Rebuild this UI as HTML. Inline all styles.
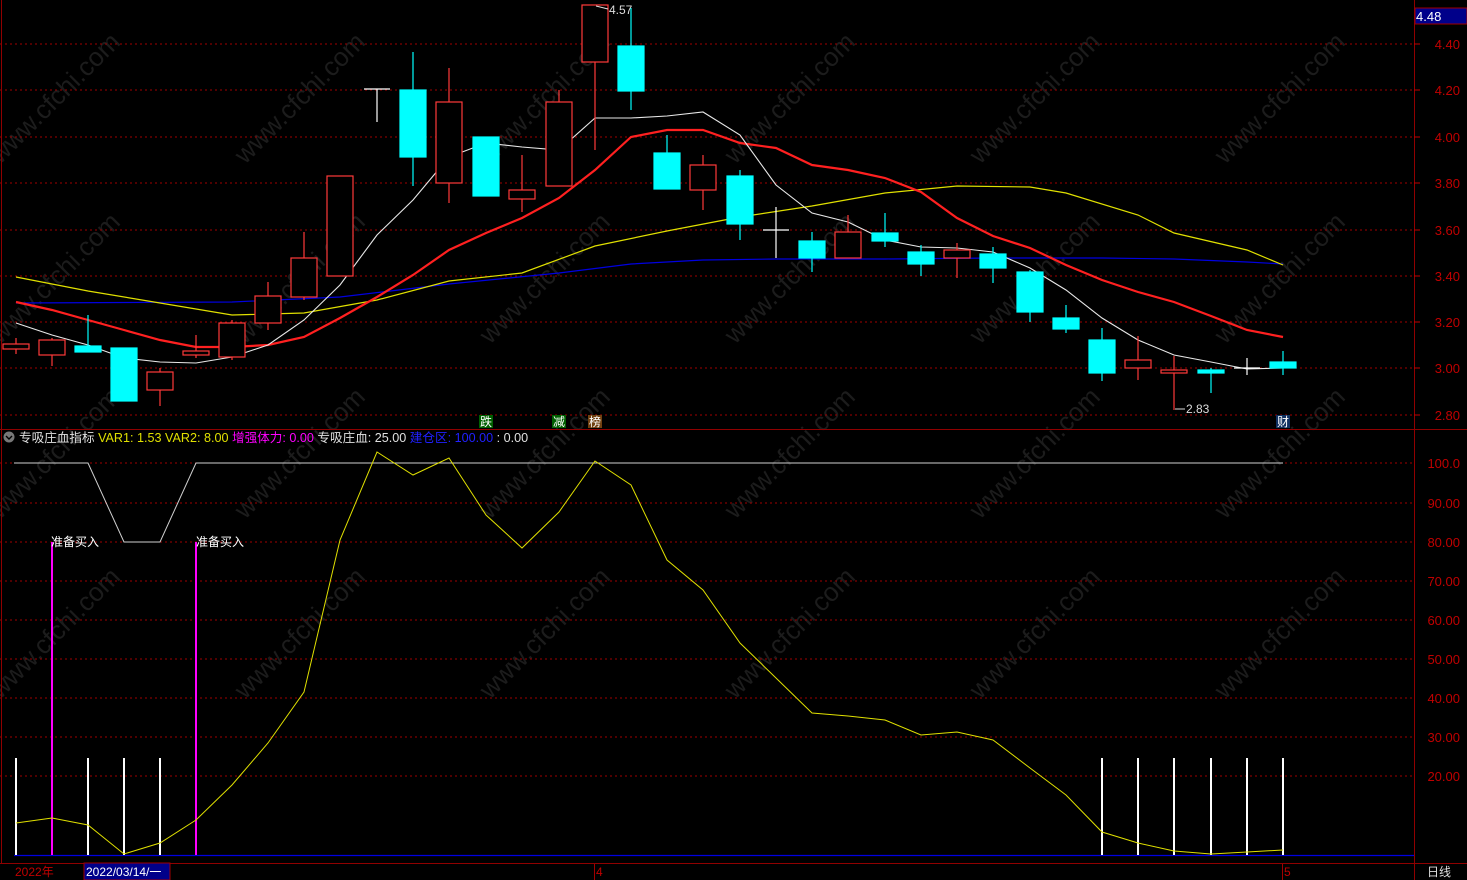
<!DOCTYPE html><html><head><meta charset="utf-8"><style>
html,body{margin:0;padding:0;background:#000;width:1467px;height:880px;overflow:hidden}
svg{display:block}
text{font-family:"Liberation Sans","Noto Sans CJK SC",sans-serif}
</style></head><body>
<svg width="1467" height="880" viewBox="0 0 1467 880" xmlns="http://www.w3.org/2000/svg">
<rect width="1467" height="880" fill="#000"/>
<!-- watermark -->
<g fill="#1c1c1c" font-size="26">
<text transform="translate(0,165) rotate(-45)">www.cfchi.com</text>
<text transform="translate(245,165) rotate(-45)">www.cfchi.com</text>
<text transform="translate(490,165) rotate(-45)">www.cfchi.com</text>
<text transform="translate(735,165) rotate(-45)">www.cfchi.com</text>
<text transform="translate(980,165) rotate(-45)">www.cfchi.com</text>
<text transform="translate(1225,165) rotate(-45)">www.cfchi.com</text>
<text transform="translate(0,345) rotate(-45)">www.cfchi.com</text>
<text transform="translate(245,345) rotate(-45)">www.cfchi.com</text>
<text transform="translate(490,345) rotate(-45)">www.cfchi.com</text>
<text transform="translate(735,345) rotate(-45)">www.cfchi.com</text>
<text transform="translate(980,345) rotate(-45)">www.cfchi.com</text>
<text transform="translate(1225,345) rotate(-45)">www.cfchi.com</text>
<text transform="translate(0,520) rotate(-45)">www.cfchi.com</text>
<text transform="translate(245,520) rotate(-45)">www.cfchi.com</text>
<text transform="translate(490,520) rotate(-45)">www.cfchi.com</text>
<text transform="translate(735,520) rotate(-45)">www.cfchi.com</text>
<text transform="translate(980,520) rotate(-45)">www.cfchi.com</text>
<text transform="translate(1225,520) rotate(-45)">www.cfchi.com</text>
<text transform="translate(0,700) rotate(-45)">www.cfchi.com</text>
<text transform="translate(245,700) rotate(-45)">www.cfchi.com</text>
<text transform="translate(490,700) rotate(-45)">www.cfchi.com</text>
<text transform="translate(735,700) rotate(-45)">www.cfchi.com</text>
<text transform="translate(980,700) rotate(-45)">www.cfchi.com</text>
<text transform="translate(1225,700) rotate(-45)">www.cfchi.com</text>
</g>
<g stroke="#a00000" stroke-dasharray="2,3" stroke-width="1">
<line x1="0" y1="44" x2="1414" y2="44"/><line x1="0" y1="90" x2="1414" y2="90"/><line x1="0" y1="137" x2="1414" y2="137"/><line x1="0" y1="183" x2="1414" y2="183"/><line x1="0" y1="230" x2="1414" y2="230"/><line x1="0" y1="276" x2="1414" y2="276"/><line x1="0" y1="322" x2="1414" y2="322"/><line x1="0" y1="368" x2="1414" y2="368"/><line x1="0" y1="415" x2="1414" y2="415"/>
<line x1="0" y1="463" x2="1414" y2="463"/><line x1="0" y1="503" x2="1414" y2="503"/><line x1="0" y1="542" x2="1414" y2="542"/><line x1="0" y1="581" x2="1414" y2="581"/><line x1="0" y1="620" x2="1414" y2="620"/><line x1="0" y1="659" x2="1414" y2="659"/><line x1="0" y1="698" x2="1414" y2="698"/><line x1="0" y1="737" x2="1414" y2="737"/><line x1="0" y1="776" x2="1414" y2="776"/>
</g>
<g stroke="#900000" stroke-width="1" fill="none">
<line x1="0" y1="429.5" x2="1467" y2="429.5"/>
<line x1="0" y1="863.5" x2="1467" y2="863.5"/>
<line x1="1414.5" y1="0" x2="1414.5" y2="880"/>
<line x1="1.5" y1="0" x2="1.5" y2="863"/>
</g>
<g fill="#c00000" font-size="13" text-anchor="end">
<text x="1460" y="49">4.40</text><text x="1460" y="95">4.20</text><text x="1460" y="142">4.00</text><text x="1460" y="188">3.80</text><text x="1460" y="235">3.60</text><text x="1460" y="281">3.40</text><text x="1460" y="327">3.20</text><text x="1460" y="373">3.00</text><text x="1460" y="420">2.80</text>
<text x="1460" y="468">100.0</text><text x="1460" y="508">90.00</text><text x="1460" y="547">80.00</text><text x="1460" y="586">70.00</text><text x="1460" y="625">60.00</text><text x="1460" y="664">50.00</text><text x="1460" y="703">40.00</text><text x="1460" y="742">30.00</text><text x="1460" y="781">20.00</text>
</g>
<g stroke="#c00000"><line x1="1414" y1="44" x2="1420" y2="44"/><line x1="1414" y1="90" x2="1420" y2="90"/><line x1="1414" y1="137" x2="1420" y2="137"/><line x1="1414" y1="183" x2="1420" y2="183"/><line x1="1414" y1="230" x2="1420" y2="230"/><line x1="1414" y1="276" x2="1420" y2="276"/><line x1="1414" y1="322" x2="1420" y2="322"/><line x1="1414" y1="368" x2="1420" y2="368"/><line x1="1414" y1="415" x2="1420" y2="415"/></g>
<rect x="1415" y="8" width="52" height="16" fill="#00008a" stroke="#a00000"/>
<text x="1416" y="21" fill="#fff" font-size="13">4.48</text>
<polyline fill="none" stroke="#0000e0" stroke-width="1.2" points="16,303 232,302 340,297 449,284 559,273 631,264 703,260 776,259 885,259 993,258 1102,258 1174,259 1247,262 1283,264"/>
<polyline fill="none" stroke="#e0e000" stroke-width="1.2" points="16,277 88,291 160,303 232,315 304,313 377,300 449,281 522,273 595,246 667,231 740,217 812,206 885,193 957,186 1030,187 1066,193 1138,215 1174,233 1247,250 1283,265"/>
<polyline fill="none" stroke="#ff2020" stroke-width="2.2" points="16,302 52,310 88,320 124,330 160,340 196,347 232,347 268,345 304,337 340,318 377,297 413,275 449,250 486,233 522,218 559,198 595,170 631,137 667,130 703,130 740,143 776,148 812,165 848,170 885,178 921,192 957,218 993,236 1030,248 1066,265 1102,280 1138,292 1174,302 1211,316 1247,330 1283,337"/>
<polyline fill="none" stroke="#e8e8e8" stroke-width="1.1" points="16,323 52,335 88,345 124,358 160,362 196,363 232,357 268,345 304,320 340,285 377,235 413,200 449,157 486,143 522,147 559,150 595,118 631,118 667,116 703,112 740,135 776,185 812,213 848,222 885,240 921,247 957,248 993,252 1030,268 1066,290 1102,318 1138,340 1174,355 1211,362 1247,369 1283,368"/>
<g stroke="#ff3a3a" stroke-width="1.2" fill="#000">
<line x1="16" y1="338" x2="16" y2="354"/><rect x="3" y="344" width="26" height="5"/>
<line x1="52" y1="338" x2="52" y2="366"/><rect x="39" y="340" width="26" height="15"/>
<line x1="160" y1="368" x2="160" y2="406"/><rect x="147" y="372" width="26" height="18"/>
<line x1="196" y1="335" x2="196" y2="358"/><rect x="183" y="351" width="26" height="4"/>
<line x1="232" y1="320" x2="232" y2="360"/><rect x="219" y="323" width="26" height="34"/>
<line x1="268" y1="282" x2="268" y2="330"/><rect x="255" y="296" width="26" height="27"/>
<line x1="304" y1="232" x2="304" y2="300"/><rect x="291" y="258" width="26" height="39"/>
<rect x="327" y="176" width="26" height="100"/>
<line x1="449" y1="68" x2="449" y2="203"/><rect x="436" y="102" width="26" height="81"/>
<line x1="522" y1="155" x2="522" y2="212"/><rect x="509" y="190" width="26" height="9"/>
<line x1="559" y1="90" x2="559" y2="186"/><rect x="546" y="102" width="26" height="84"/>
<line x1="595" y1="5" x2="595" y2="150"/><rect x="582" y="5" width="26" height="57"/>
<line x1="703" y1="155" x2="703" y2="210"/><rect x="690" y="165" width="26" height="25"/>
<line x1="848" y1="215" x2="848" y2="258"/><rect x="835" y="232" width="26" height="26"/>
<line x1="957" y1="243" x2="957" y2="278"/><rect x="944" y="250" width="26" height="8"/>
<line x1="1138" y1="336" x2="1138" y2="380"/><rect x="1125" y="360" width="26" height="8"/>
<line x1="1174" y1="356" x2="1174" y2="410"/><rect x="1161" y="370" width="26" height="3"/>
</g>
<g stroke="#00ffff" stroke-width="1.2" fill="#00ffff">
<line x1="88" y1="315" x2="88" y2="352"/><rect x="75" y="346" width="26" height="6"/>
<line x1="124" y1="348" x2="124" y2="401"/><rect x="111" y="348" width="26" height="53"/>
<line x1="413" y1="52" x2="413" y2="186"/><rect x="400" y="90" width="26" height="67"/>
<rect x="473" y="137" width="26" height="59"/>
<line x1="631" y1="8" x2="631" y2="110"/><rect x="618" y="46" width="26" height="45"/>
<line x1="667" y1="135" x2="667" y2="189"/><rect x="654" y="153" width="26" height="36"/>
<line x1="740" y1="170" x2="740" y2="240"/><rect x="727" y="176" width="26" height="48"/>
<line x1="812" y1="232" x2="812" y2="272"/><rect x="799" y="241" width="26" height="17"/>
<line x1="885" y1="213" x2="885" y2="247"/><rect x="872" y="233" width="26" height="8"/>
<line x1="921" y1="245" x2="921" y2="276"/><rect x="908" y="252" width="26" height="12"/>
<line x1="993" y1="247" x2="993" y2="283"/><rect x="980" y="254" width="26" height="14"/>
<line x1="1030" y1="270" x2="1030" y2="322"/><rect x="1017" y="272" width="26" height="40"/>
<line x1="1066" y1="305" x2="1066" y2="333"/><rect x="1053" y="318" width="26" height="11"/>
<line x1="1102" y1="328" x2="1102" y2="381"/><rect x="1089" y="340" width="26" height="33"/>
<line x1="1211" y1="368" x2="1211" y2="393"/><rect x="1198" y="370" width="26" height="3"/>
<line x1="1283" y1="351" x2="1283" y2="375"/><rect x="1270" y="362" width="26" height="6"/>
</g>
<g stroke="#fff" stroke-width="1.2">
<line x1="377" y1="89" x2="377" y2="122"/><line x1="364" y1="89" x2="390" y2="89"/>
<line x1="776" y1="207" x2="776" y2="258"/><line x1="763" y1="230" x2="789" y2="230"/>
<line x1="1247" y1="358" x2="1247" y2="375"/><line x1="1234" y1="368" x2="1260" y2="368"/>
</g>
<text x="609" y="14" fill="#ddd" font-size="12">4.57</text><line x1="596" y1="6" x2="608" y2="9" stroke="#ddd"/>
<text x="1186" y="413" fill="#ddd" font-size="12">2.83</text><line x1="1175" y1="409" x2="1185" y2="409" stroke="#ddd"/>
<g font-size="12">
<rect x="479" y="415" width="14" height="13" fill="#006000"/><text x="480" y="426" fill="#fff">跌</text>
<rect x="552" y="415" width="14" height="13" fill="#006000"/><text x="553" y="426" fill="#fff">减</text>
<rect x="588" y="415" width="14" height="13" fill="#704010"/><text x="589" y="426" fill="#fff">榜</text>
<rect x="1276" y="415" width="14" height="13" fill="#103060"/><text x="1277" y="426" fill="#fff">财</text>
</g>
<circle cx="9" cy="437" r="5.5" fill="#777"/><path d="M6,436 L9,439 L12,436" stroke="#000" stroke-width="1.4" fill="none"/>
<text x="19" y="442" font-size="12.6"><tspan fill="#e0e0e0">专吸庄血指标 </tspan><tspan fill="#e0e000">VAR1: 1.53  VAR2: 8.00 </tspan><tspan fill="#ff00ff"> 增强体力: 0.00 </tspan><tspan fill="#e0e0e0"> 专吸庄血: 25.00 </tspan><tspan fill="#2020ff"> 建仓区: 100.00 </tspan><tspan fill="#e0e0e0">: 0.00</tspan></text>
<line x1="14" y1="855.5" x2="1414" y2="855.5" stroke="#0000e0" stroke-width="1.2"/>
<polyline fill="none" stroke="#d0d0d0" stroke-width="1" points="14,463 88,463 124,542 160,542 196,463 1283,463"/>
<g stroke="#fff" stroke-width="2">
<line x1="16" y1="758" x2="16" y2="855"/><line x1="88" y1="758" x2="88" y2="855"/><line x1="124" y1="758" x2="124" y2="855"/><line x1="160" y1="758" x2="160" y2="855"/>
<line x1="1102" y1="758" x2="1102" y2="855"/><line x1="1138" y1="758" x2="1138" y2="855"/><line x1="1174" y1="758" x2="1174" y2="855"/><line x1="1211" y1="758" x2="1211" y2="855"/><line x1="1247" y1="758" x2="1247" y2="855"/><line x1="1283" y1="758" x2="1283" y2="855"/>
</g>
<g stroke="#ff00ff" stroke-width="2"><line x1="52" y1="542" x2="52" y2="855"/><line x1="196" y1="542" x2="196" y2="855"/></g>
<text x="51" y="546" fill="#fff" font-size="12">准备买入</text>
<text x="196" y="546" fill="#fff" font-size="12">准备买入</text>
<polyline fill="none" stroke="#e0e000" stroke-width="1" points="16,823 52,818 88,825 124,854 160,843 196,820 232,785 268,743 304,692 340,540 377,452 413,475 449,458 486,515 522,548 559,512 595,461 631,485 667,560 703,590 740,643 776,678 812,713 848,716 885,720 921,735 957,732 993,740 1030,768 1066,795 1102,832 1138,843 1174,851 1211,854 1247,852 1283,850"/>
<text x="15" y="876" fill="#c00000" font-size="12">2022年</text>
<rect x="84" y="863" width="86" height="17" fill="#00008a" stroke="#a00000"/>
<text x="86" y="876" fill="#fff" font-size="12">2022/03/14/一</text>
<line x1="594.5" y1="864" x2="594.5" y2="880" stroke="#a00000"/><text x="596" y="876" fill="#c00000" font-size="12">4</text>
<line x1="1282.5" y1="864" x2="1282.5" y2="880" stroke="#a00000"/><text x="1284" y="876" fill="#c00000" font-size="12">5</text>
<text x="1427" y="876" fill="#ddd" font-size="12">日线</text>
</svg>
</body></html>
